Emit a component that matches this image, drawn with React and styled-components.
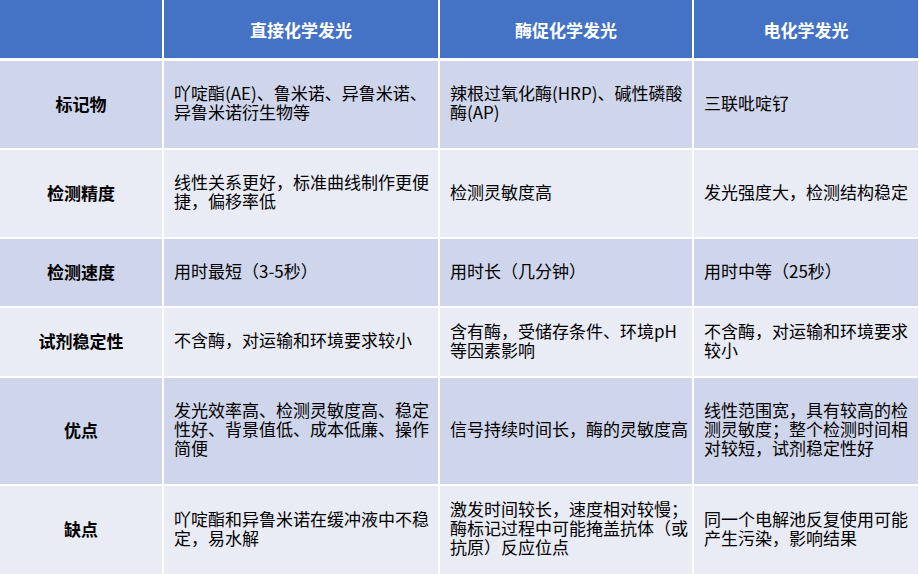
import React from 'react';
import styled, { createGlobalStyle } from 'styled-components';

const GlobalStyle = createGlobalStyle`
  html, body {
    margin: 0;
    padding: 0;
    background: #ffffff;
  }
  body {
    font-family: "Noto Sans CJK SC", "Noto Sans", sans-serif;
    color: #000;
  }
`;

const COLS = '162px 274px 252px 224px';

const Table = styled.div`
  width: 919px;
  height: 574px;
  display: flex;
  flex-direction: column;
  gap: 2px;
  background: #ffffff;
  overflow: hidden;
`;

const HeaderRow = styled.div`
  display: grid;
  grid-template-columns: ${COLS};
  column-gap: 2px;
  height: 58px;
  margin-bottom: 1px;
  flex-shrink: 0;
`;

const HeadCell = styled.div`
  background: #4472c4;
  color: #ffffff;
  font-weight: 700;
  font-size: 17px;
  display: flex;
  align-items: center;
  justify-content: center;
`;

const Row = styled.div`
  display: grid;
  grid-template-columns: ${COLS};
  column-gap: 2px;
  height: ${(p) => p.$height}px;
  flex-shrink: 0;
  & > div {
    background: ${(p) => (p.$shade ? '#cfd5ea' : '#e9ebf5')};
  }
`;

const LabelCell = styled.div`
  display: flex;
  align-items: center;
  justify-content: center;
  padding-bottom: 3px;
  font-weight: 700;
  font-size: 17px;
`;

const Cell = styled.div`
  display: flex;
  align-items: center;
  padding: 0 0 3px 10px;
  font-size: 17px;
  line-height: 18.7px;
`;

const headers = ['', '直接化学发光', '酶促化学发光', '电化学发光'];

const rows = [
  {
    label: '标记物',
    height: 87,
    cells: ['吖啶酯(AE)、鲁米诺、异鲁米诺、异鲁米诺衍生物等', '辣根过氧化酶(HRP)、碱性磷酸酶(AP)', '三联吡啶钌'],
  },
  {
    label: '检测精度',
    height: 87,
    cells: ['线性关系更好，标准曲线制作更便捷，偏移率低', '检测灵敏度高', '发光强度大，检测结构稳定'],
  },
  {
    label: '检测速度',
    height: 67,
    cells: ['用时最短（3-5秒）', '用时长（几分钟）', '用时中等（25秒）'],
  },
  {
    label: '试剂稳定性',
    height: 68,
    cells: ['不含酶，对运输和环境要求较小', '含有酶，受储存条件、环境pH等因素影响', '不含酶，对运输和环境要求较小'],
  },
  {
    label: '优点',
    height: 106,
    cells: [
      '发光效率高、检测灵敏度高、稳定性好、背景值低、成本低廉、操作简便',
      '信号持续时间长，酶的灵敏度高',
      '线性范围宽，具有较高的检测灵敏度；整个检测时间相对较短，试剂稳定性好',
    ],
  },
  {
    label: '缺点',
    height: 88,
    cells: [
      '吖啶酯和异鲁米诺在缓冲液中不稳定，易水解',
      '激发时间较长，速度相对较慢；酶标记过程中可能掩盖抗体（或抗原）反应位点',
      '同一个电解池反复使用可能产生污染，影响结果',
    ],
  },
];

export default function App() {
  return (
    <>
      <GlobalStyle />
      <Table>
        <HeaderRow>
          {headers.map((h, i) => (
            <HeadCell key={i}>{h}</HeadCell>
          ))}
        </HeaderRow>
        {rows.map((r, i) => (
          <Row key={r.label} $height={r.height} $shade={i % 2 === 0}>
            <LabelCell>{r.label}</LabelCell>
            {r.cells.map((c, j) => (
              <Cell key={j}>{c}</Cell>
            ))}
          </Row>
        ))}
      </Table>
    </>
  );
}
